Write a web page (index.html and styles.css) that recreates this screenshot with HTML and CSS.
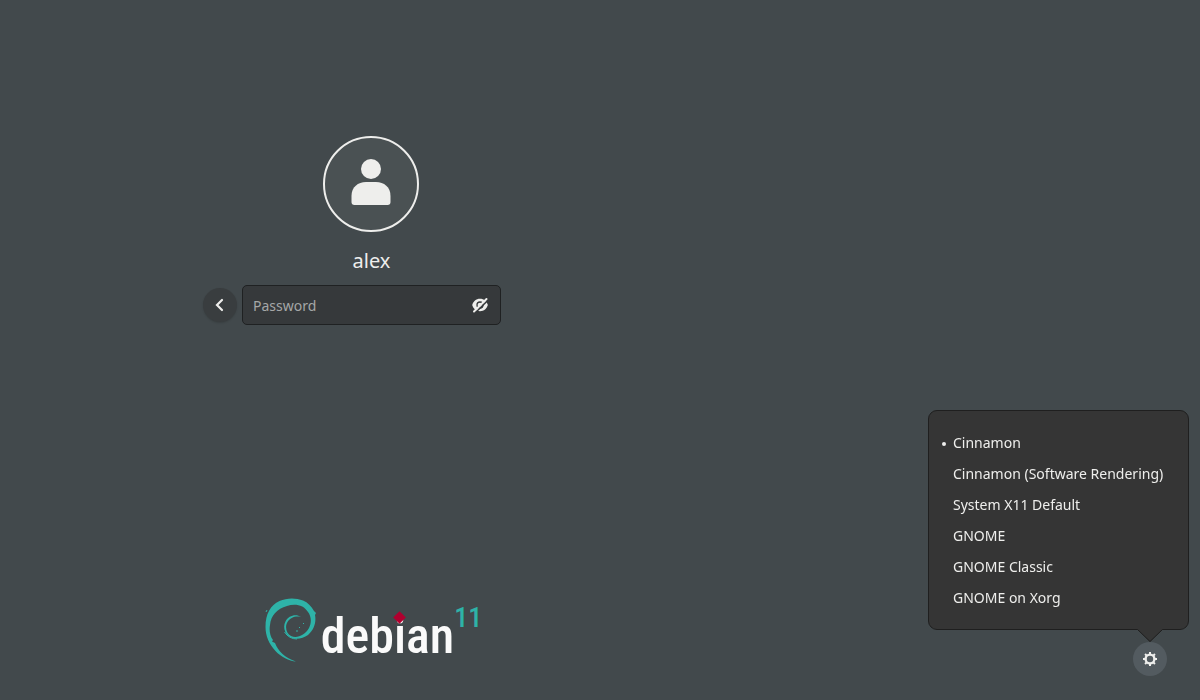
FILE: index.html
```html
<!DOCTYPE html>
<html lang="en">
<head>
<meta charset="UTF-8">
<title>Login</title>
<link rel="stylesheet" href="styles.css">
</head>
<body>
<main class="greeter">
  <div class="left">
    <form class="login">
      <div class="avatar">
        <svg width="40" height="46" viewBox="0 0 40 46" fill="#eeeeec">
          <circle cx="20" cy="10" r="10"/>
          <path d="M0.500 37C0.500 28 7 23 15 23H25C33 23 39.500 28 39.500 37V43Q39.500 46 36.500 46H3.500Q0.500 46 0.500 43Z"/>
        </svg>
      </div>
      <label class="username" for="password">alex</label>
      <div class="entry-row">
        <button class="round back" type="button" aria-label="Back">
          <svg width="16" height="16" viewBox="0 0 16 16" fill="none" stroke="#eeeeec" stroke-width="2.200" stroke-linecap="round"><path d="M10 3L5 8L10 13"/></svg>
        </button>
        <div class="entry">
          <input id="password" type="password" placeholder="Password">
          <button class="peek" type="button" aria-label="Show password">
            <svg width="16" height="16" viewBox="0 0 16 16">
              <path d="M8 1.800C4 1.800 1.200 4.500 0.200 8C1.200 11.500 4 14.200 8 14.200S14.800 11.500 15.800 8C14.800 4.500 12 1.800 8 1.800Z" fill="#eeeeec"/>
              <circle cx="8" cy="8" r="3" fill="none" stroke="#36393b" stroke-width="1.300"/>
              <path d="M2.500 16.500L16.500 2.500" stroke="#36393b" stroke-width="1.600"/>
              <path d="M2 14.500L14.500 2" stroke="#eeeeec" stroke-width="2" stroke-linecap="round"/>
            </svg>
          </button>
        </div>
      </div>
    </form>
    <div class="logo">
      <svg class="swirl" width="52" height="64" viewBox="0 0 52 64">
        <path fill="#2eb3a8" d="M31 63.500C24 63 16 59 10.500 53C4 46 0.500 38 0.500 29C0.500 16 5.500 7 14.500 3C22 -0.500 31 -0.300 38 2.500C43 4.500 46 8 49 13L51 15L50 17C51.500 24 49 32 43 37C37 41.500 28 42 23.500 38C19 34.500 18 28 20.500 23.500C23.500 17.500 31 15.500 36 19C31 17.500 25 19.500 22.500 24C19.500 29 21.500 35.500 26 38C32 41 40 37 44 30C47 24 46 18 43 14C39 7 30 5 22 8C12 11 6 17 5 27C4 32 5 38 8 42L7 43.500L10 45C13 53 20 60 31 63.500Z"/>
        <path fill="none" stroke="#2eb3a8" d="M19.500 34Q24 41 32 41M1 14l1-2M34 29l1 1M38 26l1-1M31 33h2"/>
      </svg>
      <div class="wordmark">deb<span class="letter-i">i</span>an</div>
      <div class="release">11</div>
    </div>
  </div>
</main>
<div class="session">
  <div class="menu" role="menu">
    <button class="item" role="menuitemradio" aria-checked="true">Cinnamon</button>
    <button class="item" role="menuitemradio" aria-checked="false">Cinnamon (Software Rendering)</button>
    <button class="item" role="menuitemradio" aria-checked="false">System X11 Default</button>
    <button class="item" role="menuitemradio" aria-checked="false">GNOME</button>
    <button class="item" role="menuitemradio" aria-checked="false">GNOME Classic</button>
    <button class="item" role="menuitemradio" aria-checked="false">GNOME on Xorg</button>
    <svg class="arrow" width="26" height="13" viewBox="0 0 26 13"><path d="M0 0H26L13 13Z" fill="#353535"/><path d="M0.500 0.500L13 12.500L25.500 0.500" fill="none" stroke="#1f1f1f"/></svg>
  </div>
  <button class="round gear" aria-label="Session">
    <svg width="16" height="16" viewBox="0 0 16 16" fill="none" stroke="#eeeeec">
      <circle cx="8" cy="8" r="4.400" stroke-width="2.400"/>
      <path stroke-width="2" d="M8 1V4M8 12V15M1 8H4M12 8H15M3.050 3.050L5.100 5.100M10.900 10.900L12.950 12.950M3.050 12.950L5.100 10.900M10.900 5.100L12.950 3.050"/>
    </svg>
  </button>
</div>
</body>
</html>
```
FILE: styles.css
```css
* {
  box-sizing: border-box;
}
body {
  margin: 0;
  background: #42494c;
  color: #eeeeec;
  font-family: "Noto Sans", "Open Sans", sans-serif;
  font-size: 14px;
}
button, input {
  font: inherit;
  color: inherit;
  border: 0;
  padding: 0;
  background: none;
}
svg {
  display: block;
}
.greeter {
  display: grid;
  grid-template-columns: 13fr 8fr;
  min-height: 100vh;
}
.left {
  display: flex;
  flex-direction: column;
  justify-content: space-between;
  align-items: center;
  padding: 136px 0 38px;
}
.login {
  display: flex;
  flex-direction: column;
  align-items: center;
}
.avatar {
  display: flex;
  justify-content: center;
  width: 96px;
  height: 96px;
  padding-top: 21px;
  border: 2px solid #eeeeec;
  border-radius: 50%;
  background: #4a5153;
}
.username {
  margin: 15px 0 10px;
  font-size: 20px;
  line-height: 28px;
}
.entry-row {
  display: grid;
  grid-template-columns: 34px 259px 34px;
  gap: 5px;
  align-items: center;
}
.round {
  display: flex;
  align-items: center;
  justify-content: center;
  width: 34px;
  height: 34px;
  border-radius: 50%;
}
.back {
  background: #393d3f;
  box-shadow: 0 1px 2px rgba(0,0,0,0.15);
}
.entry {
  display: flex;
  align-items: center;
  height: 40px;
  padding: 0 12px 0 10px;
  border: 1px solid #1f2122;
  border-radius: 5px;
  background: #36393b;
}
.entry input {
  flex: 1;
  min-width: 0;
  height: 100%;
  outline: none;
}
.entry input::placeholder {
  color: #a5a7a7;
  opacity: 1;
}
.logo {
  display: flex;
  align-items: flex-start;
  padding-left: 4px;
}
.swirl {
  margin-right: 4px;
}
.wordmark {
  height: 64px;
  color: #fafafa;
  font-family: "Roboto Condensed", "Liberation Sans", sans-serif;
  font-size: 50px;
  font-weight: 500;
  line-height: 76px;
}
.letter-i {
  position: relative;
}
/* red diamond over the dot of the i */
.letter-i::before {
  content: "";
  position: absolute;
  top: 6px;
  left: 1px;
  width: 9px;
  height: 9px;
  background: #b0002f;
  transform: rotate(45deg);
}
.release {
  color: #2eb3a8;
  font-family: "Roboto Condensed", "Liberation Sans", sans-serif;
  font-size: 28px;
  font-weight: 500;
  line-height: 40px;
}
.session {
  position: fixed;
  right: 33px;
  bottom: 24px;
}
.gear {
  background: #535b60;
}
.menu {
  position: absolute;
  right: -22px;
  bottom: 46px;
  width: 261px;
  padding: 16px 0;
  border: 1px solid #1f1f1f;
  border-radius: 9px;
  background: #353535;
}
.item {
  display: block;
  position: relative;
  width: 100%;
  padding-left: 24px;
  line-height: 31px;
  text-align: left;
  white-space: nowrap;
}
.item[aria-checked="true"]::before {
  content: "";
  position: absolute;
  left: 13px;
  top: 15px;
  width: 4px;
  height: 4px;
  border-radius: 50%;
  background: #eeeeec;
}
.arrow {
  position: absolute;
  right: 25px;
  top: 100%;
}
```
